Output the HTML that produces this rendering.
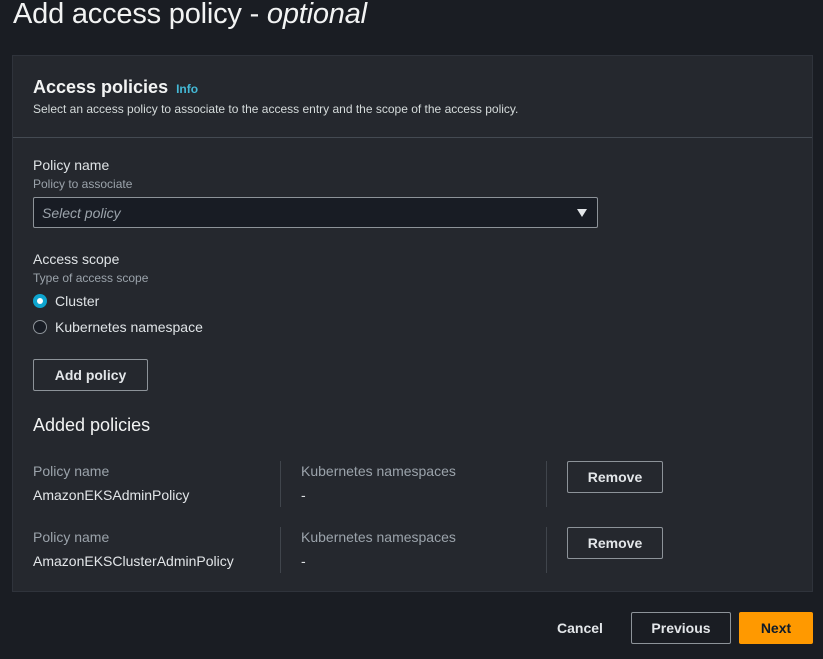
<!DOCTYPE html>
<html><head><meta charset="utf-8"><style>
*{margin:0;padding:0;box-sizing:border-box}
body{width:823px;height:659px;background:#1a1d23;font-family:"Liberation Sans",sans-serif;color:#d5dbdb;position:relative;overflow:hidden}
.a{position:absolute;white-space:nowrap}
h1{position:absolute;left:13px;top:-2px;font-size:29px;font-weight:400;color:#f2f3f3;letter-spacing:-0.2px}
.panel{position:absolute;left:12px;top:55px;width:801px;height:537px;background:#25282e;border:1px solid #2f333b}
.div{position:absolute;left:0;top:81px;width:799px;height:1px;background:#444a52}
.lbl{font-size:14px;color:#dfe3e6}
.sub{font-size:12px;color:#9ba3ab}
.btn{position:absolute;border:1px solid #8d9399;border-radius:2px;font-weight:700;font-size:14px;color:#e3e6e9;text-align:center;background:#25282e}
.vl{position:absolute;width:1px;background:#40454c}
</style></head><body>
<h1>Add access policy - <i>optional</i></h1>
<div class="panel">
<div class="a" style="left:20px;top:21px;font-size:18px;font-weight:700;color:#f2f3f3">Access policies <span style="font-size:12px;color:#44b9d6;margin-left:3px">Info</span></div>
<div class="a" style="left:20px;top:46px;font-size:12px;color:#d5dbdb">Select an access policy to associate to the access entry and the scope of the access policy.</div>
<div class="div"></div>
<div class="a lbl" style="left:20px;top:101px">Policy name</div>
<div class="a sub" style="left:20px;top:121px">Policy to associate</div>
<div class="a" style="left:20px;top:141px;width:565px;height:31px;background:#181c24;border:1px solid #8d9399;border-radius:2px">
<span class="a" style="left:8px;top:7px;font-size:14px;font-style:italic;color:#9ba3ab">Select policy</span>
<span class="a" style="right:10px;top:11px;width:0;height:0;border-left:5px solid transparent;border-right:5px solid transparent;border-top:8px solid #e3e6e9"></span>
</div>
<div class="a lbl" style="left:20px;top:195px">Access scope</div>
<div class="a sub" style="left:20px;top:215px">Type of access scope</div>
<div class="a" style="left:20px;top:238px;width:14px;height:14px;border-radius:50%;background:#0ea5cf"><div style="margin:4px;width:6px;height:6px;border-radius:50%;background:#fff"></div></div>
<div class="a lbl" style="left:42px;top:237px">Cluster</div>
<div class="a" style="left:20px;top:264px;width:14px;height:14px;border-radius:50%;border:1.5px solid #8d9399;background:#181c24"></div>
<div class="a lbl" style="left:42px;top:263px">Kubernetes namespace</div>
<div class="btn" style="left:20px;top:303px;width:115px;height:32px;line-height:30px">Add policy</div>
<div class="a" style="left:20px;top:359px;font-size:18px;color:#f2f3f3">Added policies</div>
<div class="a sub" style="left:20px;top:407px;font-size:14px">Policy name</div>
<div class="a lbl" style="left:20px;top:431px;color:#e3e6e9">AmazonEKSAdminPolicy</div>
<div class="vl" style="left:267px;top:405px;height:46px"></div>
<div class="a sub" style="left:288px;top:407px;font-size:14px">Kubernetes namespaces</div>
<div class="a lbl" style="left:288px;top:431px">-</div>
<div class="vl" style="left:533px;top:405px;height:46px"></div>
<div class="btn" style="left:554px;top:405px;width:96px;height:32px;line-height:30px">Remove</div>
<div class="a sub" style="left:20px;top:473px;font-size:14px">Policy name</div>
<div class="a lbl" style="left:20px;top:497px;color:#e3e6e9">AmazonEKSClusterAdminPolicy</div>
<div class="vl" style="left:267px;top:471px;height:46px"></div>
<div class="a sub" style="left:288px;top:473px;font-size:14px">Kubernetes namespaces</div>
<div class="a lbl" style="left:288px;top:497px">-</div>
<div class="vl" style="left:533px;top:471px;height:46px"></div>
<div class="btn" style="left:554px;top:471px;width:96px;height:32px;line-height:30px">Remove</div>
</div>
<div class="a" style="left:557px;top:620px;font-size:14px;font-weight:700;color:#e3e6e9">Cancel</div>
<div class="btn" style="left:631px;top:612px;width:100px;height:32px;line-height:30px;background:#1a1d23">Previous</div>
<div class="btn" style="left:739px;top:612px;width:74px;height:32px;line-height:32px;background:#ff9900;border:none;color:#0f1b2a">Next</div>
</body></html>
